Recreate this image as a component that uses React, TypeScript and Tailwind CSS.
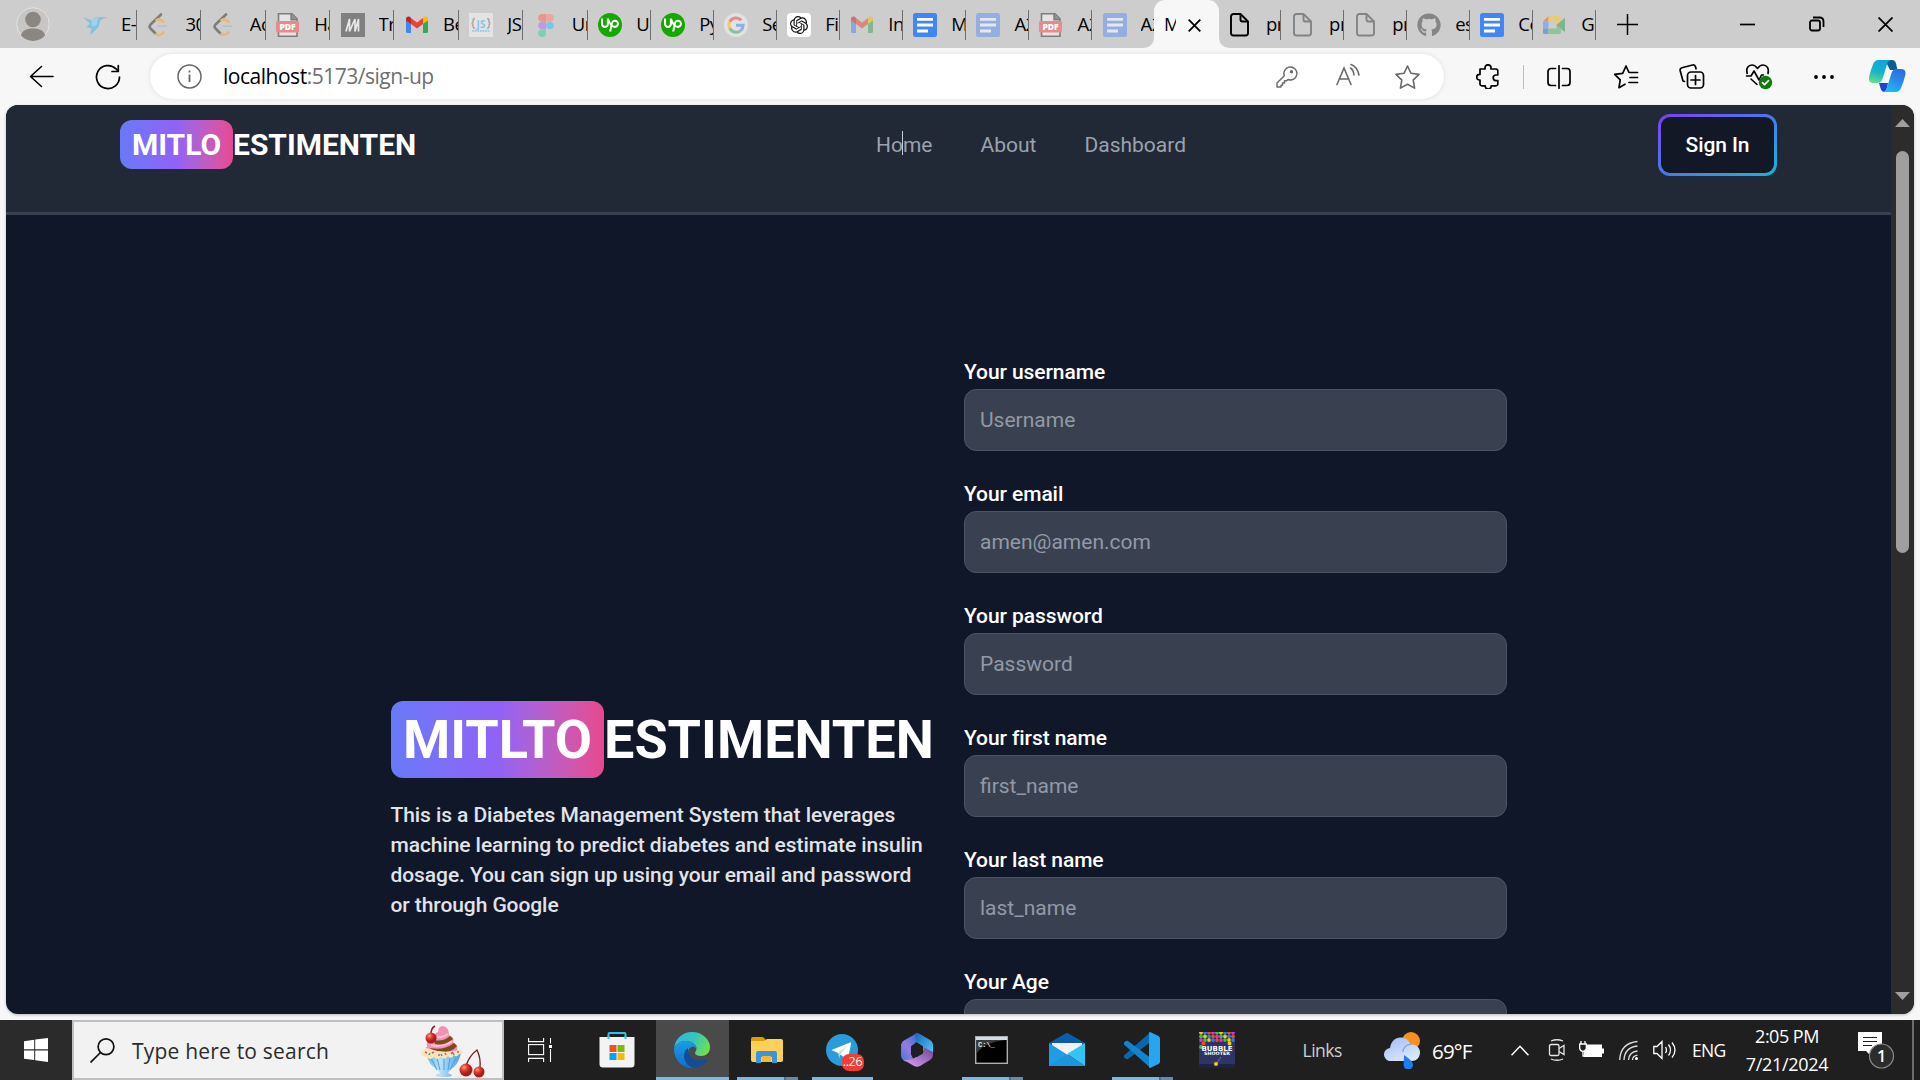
import React from 'react';
import { FaGithub } from 'react-icons/fa';
import { SiUpwork, SiOpenai } from 'react-icons/si';

/* ---------- favicons ---------- */

const Bird = () => (
  <svg width="24" height="24" viewBox="0 0 24 24" className="opacity-90">
    <path d="M0 4.500 8.500 7l4-2.500 3-.5 8.500.3-6.500 2.700L15.500 14 7 22.500 8.500 15.500 3.500 14 7 10.500z" fill="#7cc0e6" />
    <path d="m8.500 7 7-3-2 8.500-5 1z" fill="#9fd2ee" />
  </svg>
);

const Leet = () => (
  <svg width="24" height="24" viewBox="0 0 24 24" fill="none" strokeLinecap="round" strokeLinejoin="round" strokeWidth="2.600">
    <path d="m14 1.500-10.500 10q-1.800 2 0 4l5 5" stroke="#7d7d7d" />
    <path d="M9.500 7q3-2 7 1.800M9.500 21q3.500 2.500 7-1.500" stroke="#e3b878" />
    <path d="M11 13.200h8.500" stroke="#bdbdbd" strokeWidth="1.600" />
  </svg>
);

const Pdf = () => (
  <svg width="24" height="24" viewBox="0 0 24 24">
    <path d="M2.500.8h13.500l5 5v17.400H2.500z" fill="#e4e4e4" stroke="#7d7d7d" strokeWidth="1.600" />
    <path d="M15 .8v6h6" fill="#8d8d8d" stroke="#7d7d7d" strokeWidth="1.400" />
    <rect x="0" y="8" width="23" height="11.500" rx="1.500" fill="#e58b8b" />
    <text x="11.500" y="17" textAnchor="middle" fontSize="8.500" fontWeight="800" fontFamily="Open Sans, sans-serif" fill="#fff">PDF</text>
  </svg>
);

const Medium = () => (
  <svg width="24" height="24" viewBox="0 0 24 24">
    <rect width="24" height="24" fill="#808080" />
    <path d="M5 18.500 8.500 6v12.500L14 6v12.500L17.500 6v12.500" fill="none" stroke="#e6e6e6" strokeWidth="1.700" />
  </svg>
);

const Gmail = ({ faded }: { faded?: boolean }) => (
  <svg width="24" height="24" viewBox="0 0 24 24" className={faded ? 'opacity-50' : ''}>
    <path d="M1 6v12.500q0 1.500 1.500 1.500H6V9z" fill="#4285f4" />
    <path d="M18 9v11h3.500q1.500 0 1.500-1.500V6z" fill="#34a853" />
    <path d="M18 5v6l5-3.500V6c0-2.300-2.500-3-4-2z" fill="#fbbc04" />
    <path d="M6 5v6L1 7.500V6c0-2.300 2.500-3 4-2z" fill="#c5221f" />
    <path d="m6 5 6 4.600L18 5v6l-6 4.600L6 11z" fill="#ea4335" />
  </svg>
);

const JsonIcon = () => (
  <svg width="24" height="24" viewBox="0 0 24 24">
    <rect width="24" height="24" fill="#e3e3e3" />
    <path d="M6 5.500q-2 0-2 2.500t-1.500 2.500Q4 10.500 4 13t2 2M18 5.500q2 0 2 2.500t1.500 2.500Q20 10.500 20 13t-2 2" fill="none" stroke="#a8a8a8" strokeWidth="1.500" />
    <text x="12" y="14.500" textAnchor="middle" fontSize="10" fontWeight="700" fontFamily="Open Sans, sans-serif" fill="#8cc4e8">JS</text>
    <path d="M3 17.800h18" stroke="#9bcbe6" strokeWidth="1.800" strokeDasharray="2 .6" />
  </svg>
);

const Figma = () => (
  <svg width="24" height="24" viewBox="0 0 24 24">
    <path d="M8 1h4v7.700H8A3.850 3.850 0 0 1 8 1z" fill="#e59a87" />
    <path d="M12 1h4a3.850 3.850 0 0 1 0 7.700h-4z" fill="#e8a8a0" />
    <path d="M8 8.700h4v7.600H8a3.800 3.800 0 0 1 0-7.600z" fill="#bb9be3" />
    <circle cx="15.900" cy="12.500" r="3.800" fill="#80c3e6" />
    <path d="M8 16.300h4v3.900a3.900 3.900 0 1 1-4-3.900z" fill="#80cfae" />
  </svg>
);

const Upwork = () => (
  <span className="flex size-6 items-center justify-center rounded-full bg-[#14a800]">
    <SiUpwork size={18} color="#fff" />
  </span>
);

const Google = () => (
  <svg width="24" height="24" viewBox="0 0 24 24" fill="none" strokeWidth="3">
    <circle cx="12" cy="12" r="12" fill="#e2e2e2" />
    <path d="M17.200 7.200A7.200 7.200 0 0 0 5.700 8.700" stroke="#e28d87" />
    <path d="M5.700 8.700a7.200 7.200 0 0 0 0 6.600" stroke="#eccb77" />
    <path d="M5.700 15.300a7.200 7.200 0 0 0 11 2.300" stroke="#8bc29a" />
    <path d="M16.700 17.600A7.200 7.200 0 0 0 19.100 12.200H12" stroke="#8eaee4" />
  </svg>
);

const Gpt = () => (
  <span className="flex size-6 items-center justify-center rounded-[4px] bg-white">
    <SiOpenai size={18} color="#111" />
  </span>
);

const Doc = ({ faded }: { faded?: boolean }) => (
  <svg width="24" height="24" viewBox="0 0 24 24">
    <rect width="24" height="24" rx="2.500" fill={faded ? '#94aee0' : '#4285f4'} />
    <path d="M4 6.300h16M4 12h16M4 18h11" stroke={faded ? '#e3e7ef' : '#fff'} strokeWidth="2.800" />
  </svg>
);

const Page = ({ dark }: { dark?: boolean }) => (
  <svg width="24" height="24" viewBox="0 0 24 24" fill="none" stroke={dark ? '#000' : '#838383'} strokeWidth="1.900" strokeLinejoin="round">
    <path d="M5.500 1h7L20 8.500V20a2.500 2.500 0 0 1-2.500 2.500h-12A2.500 2.500 0 0 1 3 20V3.500A2.500 2.500 0 0 1 5.500 1z" />
    <path d="M12.500 1v5.500a2 2 0 0 0 2 2H20" />
  </svg>
);

const Meet = () => (
  <svg width="24" height="24" viewBox="0 0 24 24">
    <path d="M0 8.500 5.500 3v5.500z" fill="#e08c84" />
    <path d="M5.500 3H16q2 0 2 2v5l-4.500 2V8.500h-8z" fill="#e6cb78" />
    <path d="M0 8.500h5.500v7H0z" fill="#8fade2" />
    <path d="M0 15.500h5.500V21H1.500Q0 21 0 19.500z" fill="#7d9cd6" />
    <path d="M5.500 15.500h8V12l4.500 4v3q0 2-2 2H5.500z" fill="#8fc49d" />
    <path d="m13.500 12 7.500-6.500q1-.5 1 .5v12q0 1-1 .5z" fill="#7db58c" />
  </svg>
);

const tabsBefore: { t: string; icon: React.ReactNode; wide?: boolean }[] = [
  { t: 'E-', icon: <Bird />, wide: true },
  { t: '30', icon: <Leet />, wide: true },
  { t: 'Ac', icon: <Leet />, wide: true },
  { t: 'Ha', icon: <Pdf />, wide: true },
  { t: 'Tr', icon: <Medium />, wide: true },
  { t: 'Be', icon: <Gmail />, wide: true },
  { t: 'JS', icon: <JsonIcon />, wide: true },
  { t: 'Un', icon: <Figma />, wide: true },
  { t: 'U', icon: <Upwork /> },
  { t: 'Py', icon: <Upwork /> },
  { t: 'Se', icon: <Google /> },
  { t: 'Fi', icon: <Gpt /> },
  { t: 'In', icon: <Gmail faded /> },
  { t: 'M', icon: <Doc /> },
  { t: 'A2', icon: <Doc faded /> },
  { t: 'A2', icon: <Pdf /> },
  { t: 'A2', icon: <Doc faded /> },
];

const tabsAfter: { t: string; icon: React.ReactNode; wide?: boolean }[] = [
  { t: 'pr', icon: <Page dark /> },
  { t: 'pr', icon: <Page /> },
  { t: 'pr', icon: <Page /> },
  { t: 'es', icon: <FaGithub size={24} color="#858585" /> },
  { t: 'Co', icon: <Doc /> },
  { t: 'Go', icon: <Meet /> },
];

function Tab({ t, icon, wide, last }: { t: string; icon: React.ReactNode; wide?: boolean; last?: boolean }) {
  return (
    <div className={`flex h-12 shrink-0 items-center ${wide ? 'w-[64.4px]' : 'w-[63.05px]'}`}>
      <span className="mt-[2px] ml-[10.5px] w-6 shrink-0">{icon}</span>
      <span className="ml-[14px] h-[26px] min-w-0 flex-1 overflow-hidden text-[18.5px] leading-[25px] tracking-[-0.5px] whitespace-nowrap">{t}</span>
      <span className={`mt-[2px] h-[30px] w-px shrink-0 ${last ? 'bg-transparent' : 'bg-[#6f6f6f]'}`} />
    </div>
  );
}

function TabStrip() {
  return (
    <div className="flex h-12 items-center bg-[#cdcdcd] text-black">
      <div className="flex w-[72.5px] shrink-0 pl-4">
        <svg width="34" height="34" viewBox="0 0 34 34">
          <circle cx="17" cy="17" r="16.300" fill="#c8c6c4" stroke="#e4e2df" strokeWidth="1" />
          <circle cx="17" cy="12.500" r="7.800" fill="#8a8682" />
          <path d="M5 28.500C6 22.500 12 21.500 17 21.500s11 1 12 7a16 16 0 0 1-24 0z" fill="#8a8682" />
        </svg>
      </div>
      {tabsBefore.map((x, i) => (
        <Tab key={i} {...x} last={i === tabsBefore.length - 1} />
      ))}
      <div className="relative -mx-px flex h-12 w-[64.5px] shrink-0 items-center rounded-t-[11px] bg-[#f7f7f7]">
        <svg className="absolute bottom-0 -left-[10px]" width="10" height="10" viewBox="0 0 10 10">
          <path d="M10 0v10H0A10 10 0 0 0 10 0z" fill="#f7f7f7" />
        </svg>
        <svg className="absolute -right-[10px] bottom-0" width="10" height="10" viewBox="0 0 10 10">
          <path d="M0 0v10h10A10 10 0 0 1 0 0z" fill="#f7f7f7" />
        </svg>
        <span className="ml-[10px] w-[12px] overflow-hidden text-[18px] leading-[25px]">M</span>
        <svg className="mt-[2px] ml-[12px]" width="13" height="13" viewBox="0 0 13 13" stroke="#000" strokeWidth="1.800">
          <path d="m.7.7 11.600 11.600M12.300.7.700 12.300" />
        </svg>
      </div>
      {tabsAfter.map((x, i) => (
        <Tab key={i} {...x} />
      ))}
      <svg className="ml-[21.5px] shrink-0" width="21" height="21" viewBox="0 0 21 21" stroke="#000" strokeWidth="1.500">
        <path d="M10.500 0v21M0 10.500h21" />
      </svg>
      <div className="mr-[27px] ml-auto flex items-center">
        <svg width="15" height="15" viewBox="0 0 15 15" stroke="#000" strokeWidth="1.700">
          <path d="M0 7.500h15" />
        </svg>
        <svg className="ml-[54px]" width="16" height="16" viewBox="0 0 16 16" fill="none" stroke="#000" strokeWidth="1.800">
          <rect x="1" y="4.500" width="10" height="10" rx="2" />
          <path d="M4 1.500h6.500q4 0 4 4V11" />
        </svg>
        <svg className="ml-[53px]" width="15" height="15" viewBox="0 0 15 15" stroke="#000" strokeWidth="1.800">
          <path d="m.5.5 14 14M14.500.5l-14 14" />
        </svg>
      </div>
    </div>
  );
}

/* ---------- toolbar ---------- */

function Toolbar() {
  return (
    <div className="flex h-[57px] items-center bg-[#f7f7f7]">
      <svg className="ml-[29px] shrink-0" width="26" height="24" viewBox="0 0 26 24" fill="none" stroke="#000" strokeWidth="1.600" strokeLinecap="round" strokeLinejoin="round">
        <path d="M24 11.500H1.500M12.500 1.500 1.500 11.500l11 10" />
      </svg>
      <svg className="ml-[40px] shrink-0" width="26" height="26" viewBox="0 0 26 26" fill="none" stroke="#000" strokeWidth="1.700" strokeLinecap="round" strokeLinejoin="round">
        <path d="M24.500 13A11.500 11.500 0 1 1 21 4.800l2 2.200" />
        <path d="M23.300 1.500V7.500H17" />
      </svg>
      <div className="ml-[29px] flex h-[45px] w-[1294px] shrink-0 items-center rounded-full bg-white shadow-[0_0_5px_rgba(0,0,0,0.1)]">
        <svg className="ml-[26.5px] shrink-0" width="25" height="25" viewBox="0 0 25 25" fill="none" stroke="#666" strokeWidth="1.500">
          <circle cx="12.500" cy="12.500" r="11.500" />
          <path d="M12.500 10.500v7.500M12.500 6.500v2" strokeWidth="1.800" />
        </svg>
        <span className="ml-[21.5px] text-[21px] tracking-[-0.48px] text-black">
          localhost<span className="text-[#6f6f6f]">:5173/sign-up</span>
        </span>
        <div className="mr-[24.5px] ml-auto flex items-center">
          <svg width="22" height="22" viewBox="0 0 22 22" fill="none" stroke="#6a6a6a" strokeWidth="1.400" strokeLinejoin="round">
            <path d="M1 21v-4l7.300-7.300A6.500 6.500 0 1 1 12 13.500l-1.300 1.300H8.500V17H6.500v2.200H5V21z" />
            <circle cx="15.500" cy="5.800" r="1" fill="#6a6a6a" />
          </svg>
          <svg className="mb-[5px] ml-[38px]" width="24" height="24" viewBox="0 0 24 24" fill="none" stroke="#6a6a6a" strokeWidth="1.600" strokeLinecap="round">
            <path d="M1 22.500 8 6l7 16.500M3.500 17h9M14.500 6q3 2 3.500 7M15 2.500q6 2 8 10.500" />
          </svg>
          <svg className="ml-[35px]" width="25" height="24" viewBox="0 0 25 24" fill="none" stroke="#6a6a6a" strokeWidth="1.600" strokeLinejoin="round">
            <path d="m12.500 1 3.500 7.300 8 1.100-5.800 5.700 1.400 8-7.100-3.900-7.100 3.900 1.400-8L1 9.400l8-1.100z" />
          </svg>
        </div>
      </div>
      <svg className="ml-[31.5px] shrink-0" width="24" height="25" viewBox="0 0 24 25" fill="none" stroke="#000" strokeWidth="1.700" strokeLinejoin="round">
        <path d="M4 5h5V3.800a3 3 0 0 1 6 0V5h5a1.800 1.800 0 0 1 1.800 1.800v4.200h-1.800a2.800 2.800 0 0 0 0 5.600h1.800V20A1.800 1.800 0 0 1 20 21.800h-4.800v.2a3 3 0 0 1-6 0v-.2H5.800A1.800 1.800 0 0 1 4 20v-4H3.500a2.800 2.800 0 0 1 0-5.600H4z" />
      </svg>
      <span className="ml-[23.5px] h-6 w-px shrink-0 bg-[#bdbdbd]" />
      <svg className="ml-[23px] shrink-0" width="24" height="24" viewBox="0 0 24 24" fill="none" stroke="#000" strokeWidth="1.700" strokeLinecap="round">
        <path d="M8.500 3.500H4a3 3 0 0 0-3 3v11a3 3 0 0 0 3 3h4.500M15.500 3.500H20a3 3 0 0 1 3 3v11a3 3 0 0 1-3 3h-4.500M12 .8v22.400" />
      </svg>
      <svg className="ml-[42px] shrink-0" width="26" height="24" viewBox="0 0 26 24" fill="none" stroke="#000" strokeWidth="1.700" strokeLinecap="round" strokeLinejoin="round">
        <path d="M24.500 7.500H16l-3-6.500-3.300 7.300-8 1.100 5.500 5.500-1.200 7.800 6-3.500M17 12.500h7.500M16 17.500h8.500" />
      </svg>
      <svg className="ml-[40px] shrink-0" width="26" height="25" viewBox="0 0 26 25" fill="none" stroke="#000" strokeWidth="1.700" strokeLinecap="round" strokeLinejoin="round">
        <path d="M5.500 17.500 4 17 1.200 6.800A2.500 2.500 0 0 1 3 3.800L13.500 1a2.500 2.500 0 0 1 3 1.800l.5 2" />
        <rect x="8.500" y="8" width="16" height="16" rx="3.500" />
        <path d="M16.500 11.500v9M12 16h9" />
      </svg>
      <svg className="ml-[40px] shrink-0" width="28" height="27" viewBox="0 0 28 27" fill="none" stroke="#000" strokeWidth="1.600" strokeLinecap="round" strokeLinejoin="round">
        <path d="M2.200 10.500C.5 5 3.500 2 7 2c3 0 4.500 2 5.500 3.500C13.500 4 15 2 18 2c3.500 0 6.500 3 5 8.500M6 16l6 5.500M1.500 13H6l3-5 5 9 2.500-5h2" />
        <circle cx="20.500" cy="19.500" r="6.700" fill="#107c10" stroke="none" />
        <path d="m17.500 19.700 2 2 4-4" stroke="#fff" strokeWidth="1.700" />
      </svg>
      <svg className="ml-[40px] shrink-0" width="22" height="6" viewBox="0 0 22 6">
        <circle cx="3" cy="3" r="1.900" />
        <circle cx="11" cy="3" r="1.900" />
        <circle cx="19" cy="3" r="1.900" />
      </svg>
      <svg className="ml-[34px] shrink-0" width="37" height="33" viewBox="0 0 37 33">
        <defs>
          <linearGradient id="cpA" x1="0.500" y1="0" x2="0.200" y2="1">
            <stop offset="0" stopColor="#12a5dc" />
            <stop offset=".5" stopColor="#17b3c9" />
            <stop offset="1" stopColor="#6be083" />
          </linearGradient>
          <linearGradient id="cpB" x1="0.800" y1="0" x2="0.300" y2="1">
            <stop offset="0" stopColor="#2b6ce0" />
            <stop offset=".5" stopColor="#2a8bea" />
            <stop offset="1" stopColor="#19c0f4" />
          </linearGradient>
        </defs>
        <path d="M16 0h7q3 0 4 3.500L28.500 10H21z" fill="#0a5d8f" />
        <path d="M10 23h9l-2 9h-1.500q-3 0-4-4z" fill="#1746d1" />
        <path d="M9.500 0H22q-3 .8-4 4.500L13.500 19q-1.300 4-5 4H4q-5 0-4-6Q2 9 4.200 4 6 0 9.500 0z" fill="url(#cpA)" />
        <path d="M27.500 9H32q5.500 0 4.300 6-2 8-4.300 13-1.800 4-5 4H14.500q2.500-1 3.500-4.500L22.500 13q1.300-4 5-4z" fill="url(#cpB)" />
      </svg>
    </div>
  );
}

/* ---------- web page ---------- */

const fields = [
  ['Your username', 'Username'],
  ['Your email', 'amen@amen.com'],
  ['Your password', 'Password'],
  ['Your first name', 'first_name'],
  ['Your last name', 'last_name'],
  ['Your Age', 'age'],
];

function WebPage() {
  return (
    <div className="mx-[6px] flex h-[909px] overflow-hidden rounded-[12px] bg-[#101729] font-[Roboto,sans-serif] shadow-[0_1px_3px_rgba(0,0,0,0.25)]">
      <div className="h-full min-w-0 flex-1 overflow-hidden">
        <header className="flex h-[110px] items-start border-b-[3px] border-[#394150] bg-[#212936] pl-[114px]">
          <div className="mt-[15px] flex h-[49px] w-[642px] items-center text-[30px] font-bold text-white">
            <span className="flex h-[49px] w-[113px] items-center rounded-[12px] bg-linear-to-r from-[#6779f8] via-[#9062f6] to-[#e8478f] pl-3">MITLO</span>
            <span>ESTIMENTEN</span>
          </div>
          <nav className="mt-[26px] ml-[114px] flex h-[30px] items-center gap-12 text-[21px] text-[#9ba2ae]">
            <span className="relative">
              Home
              <span className="absolute top-[1px] left-[26px] h-6 w-px bg-[#c8ccd2]" />
            </span>
            <span>About</span>
            <span>Dashboard</span>
          </nav>
          <div className="mt-[9px] mr-[114px] ml-auto h-[62px] w-[119px] rounded-[12px] bg-linear-to-br from-[#7c3aed] via-[#4478ea] to-[#06b6d4] p-[3px]">
            <div className="flex h-full items-center justify-center rounded-[9px] bg-[#121826] pt-px text-[21px] font-medium tracking-[-0.08px] text-white">Sign In</div>
          </div>
        </header>
        <main className="flex pt-[142px] pl-[384.5px]">
          <section className="mt-[344px] w-[543px] shrink-0">
            <div className="flex h-[77px] items-center text-[54px] font-bold whitespace-nowrap text-white">
              <span className="flex h-[77px] w-[213.5px] shrink-0 items-center rounded-[12px] bg-linear-to-r from-[#6779f8] via-[#9062f6] to-[#e8478f] pl-[12.5px]">MITLTO</span>
              <span>ESTIMENTEN</span>
            </div>
            <p className="mt-[22px] text-[21px] leading-[30px] font-medium tracking-[-0.08px] text-[#e0e3e8]">
              This is a Diabetes Management System that leverages machine learning to predict diabetes and estimate insulin dosage. You can sign up using your email and password or through Google
            </p>
          </section>
          <form className="ml-[30.5px] flex w-[543px] shrink-0 flex-col gap-[30px]">
            {fields.map(([label, ph]) => (
              <div key={label} className="h-[92px]">
                <div className="h-[30px] text-[21px] leading-[30px] font-medium tracking-[-0.08px] text-white">{label}</div>
                <div className="mt-[2px] flex h-[62px] items-center rounded-[12px] border border-[#4b5462] bg-[#394150] pt-[2px] pl-[15px] text-[21px] text-[#9299a6]">{ph}</div>
              </div>
            ))}
          </form>
        </main>
      </div>
      <div className="flex h-full w-[23px] shrink-0 flex-col items-center bg-[#2c2c2c]">
        <svg className="mt-[14px] shrink-0" width="15" height="8" viewBox="0 0 15 8">
          <path d="M7.500 0 15 8H0z" fill="#9f9f9f" />
        </svg>
        <div className="mt-[24px] h-[402px] w-[13px] rounded-full bg-[#9f9f9f]" />
        <svg className="mt-auto mb-[14px] shrink-0" width="15" height="8" viewBox="0 0 15 8">
          <path d="M7.500 8 15 0H0z" fill="#9f9f9f" />
        </svg>
      </div>
    </div>
  );
}

/* ---------- taskbar ---------- */

function Slot({ children, run, active }: { children: React.ReactNode; run?: 'one' | 'many'; active?: boolean }) {
  return (
    <div className="relative flex h-full w-[75px] shrink-0 items-center justify-center">
      {active && <span className="absolute inset-y-0 right-0 w-[73px] bg-[#4a4a4a]" />}
      <span className="relative">{children}</span>
      {active && <span className="absolute right-0 bottom-0 h-[3px] w-[73px] bg-[#76b9ed]" />}
      {run && (
        <span className="absolute bottom-0 left-[8px] flex h-[3px] w-[61px] bg-[#76b9ed]">
          {run === 'many' && <span className="ml-[47px] w-[2px] bg-[#46708f]" />}
          {run === 'many' && <span className="w-3 bg-[#5b8db5]" />}
        </span>
      )}
    </div>
  );
}

const Cupcake = () => (
  <svg width="66" height="54" viewBox="0 0 66 54">
    <defs>
      <linearGradient id="cup" x1="0" x2="1">
        <stop offset="0" stopColor="#5cb0ee" />
        <stop offset=".4" stopColor="#b9e2fb" />
        <stop offset="1" stopColor="#4b9fe6" />
      </linearGradient>
      <radialGradient id="cher" cx=".35" cy=".3">
        <stop offset="0" stopColor="#ff9b80" />
        <stop offset=".5" stopColor="#e2412f" />
        <stop offset="1" stopColor="#a91d1c" />
      </radialGradient>
    </defs>
    <path d="M6 28h35q-3 13-11 17l-2 3 4 2q0 2-8 2t-8-2l4-2-2-3Q9 41 6 28z" fill="url(#cup)" />
    <path d="m11 33 6 12M17 33l3 12M24 33v12M30 33l-2 12M36 33l-6 12" stroke="#4d9fe2" strokeWidth="1" />
    <path d="M7 22q-2-6 7-9 0-5 4-6 0-6 5-6 6 1 6 9 6 2 4 7 6 3 4 9-16 6-32-3z" fill="#f58fb4" />
    <path d="M14 15q9 2 16-4l3 3q-6 7-18 5zM10 23q14 3 24-5l3 3q-6 8-22 6z" fill="#7b4a1e" />
    <path d="M17 12q6 1 11-3M11 20q12 3 21-4" stroke="#ffc1d6" strokeWidth="2" fill="none" />
    <path d="M1 26q4-4 9-2 14 5 29 1 4 0 4 3-2 2-4 1-2 4-5 1-3 5-6 1-4 5-7 1-4 4-7 0-4 4-7 0-7 0-6-6z" fill="#fbe7b4" />
    <path d="m5 27 2 1M12 28l2-1M18 30h2M25 28l1 2M31 29l2-2M37 27h2" stroke="#e0487f" strokeWidth="1.500" />
    <path d="m9 30 1-2M22 31l-1-2M34 30l-1-2" stroke="#3b8fe0" strokeWidth="1.500" />
    <path d="M11 9Q11 3 15 1" stroke="#7c2433" strokeWidth="1.500" fill="none" />
    <circle cx="11" cy="13" r="5.500" fill="url(#cher)" />
    <path d="M46 41q3-10 11-16 4 8 3 18" stroke="#7c2433" strokeWidth="1.400" fill="none" />
    <circle cx="46" cy="45" r="6.500" fill="url(#cher)" />
    <circle cx="59" cy="47" r="5.500" fill="url(#cher)" />
  </svg>
);

const TaskView = () => (
  <svg className="-ml-[4px] block" width="24" height="24" viewBox="0 0 24 24" fill="none" stroke="#fff" strokeWidth="1.100">
    <path d="M.6 0v3.600h15V0M.6 24v-3.600h15V24M22.500 0v5.500M22.500 11v13" />
    <rect x=".6" y="6.600" width="15" height="10" />
    <path d="M21 7h3v3h-3z" fill="#fff" stroke="none" />
  </svg>
);

const Store = () => (
  <svg width="36" height="36" viewBox="0 0 36 36">
    <path d="M9.500 7V2q0-1 1-1h15q1 0 1 1v5" fill="none" stroke="#2fc1ef" strokeWidth="2" />
    <path d="M.5 5h35v27a3.500 3.500 0 0 1-3.500 3.500H4A3.500 3.500 0 0 1 .5 32z" fill="#f3f3f3" />
    <path d="M9.500 7V4M26.500 7V4" stroke="#2fc1ef" strokeWidth="2" />
    <path d="M10.500 13h7v7h-7z" fill="#f25022" />
    <path d="M18.500 13h7v7h-7z" fill="#7fba00" />
    <path d="M10.500 21h7v7h-7z" fill="#00a4ef" />
    <path d="M18.500 21h7v7h-7z" fill="#ffb900" />
  </svg>
);

const Edge = () => (
  <svg width="36" height="36" viewBox="0 0 36 36">
    <defs>
      <linearGradient id="eA" x1="0" y1=".2" x2="1" y2=".6">
        <stop offset="0" stopColor="#35b5e9" />
        <stop offset=".5" stopColor="#33c6bd" />
        <stop offset="1" stopColor="#6fe04f" />
      </linearGradient>
      <linearGradient id="eB" x1="0" y1="0" x2="0" y2="1">
        <stop offset="0" stopColor="#1b9de2" />
        <stop offset="1" stopColor="#0d6fd0" />
      </linearGradient>
    </defs>
    <path d="M0 17C1 6 9 0 18 0c11 0 18 8 18 15 0 6-4 9-9 9-4 0-6-1.500-6-3 0-1 1.500-2 1.500-4.500C22.500 12 17 9 12 9 6 9 1.500 12 0 17z" fill="url(#eA)" />
    <path d="M0 17C1.500 12 6 9 12 9c5.500 0 10.500 3 10.500 7.500-3-3.500-8-1-8.500 4-.5 6 4 12 11 12.500-2 2-5 3-7 3C8 36 0 28 0 17z" fill="url(#eB)" />
    <path d="M14 16c-3 2-4 5-4 8 0 6 5 11.500 10 12 6-.5 11-4 13.500-8 .4-.8-.2-1.200-1-.8C24 31 13 27 14 16z" fill="#124e97" />
  </svg>
);

const Folder = () => (
  <svg width="32" height="28" viewBox="0 0 32 28">
    <path d="M0 3q0-2 2-2h10l3 3v5H0z" fill="#dd9c07" />
    <path d="M0 5h13l3-2h14q2 0 2 2v19q0 2-2 2H2q-2 0-2-2z" fill="#fdd05a" />
    <path d="M5 27V17q0-2 2-2h17q2 0 2 2v10h-5v-6H10v6z" fill="#3a94dc" />
    <path d="M11 20h9v6h-9z" fill="#f7b733" />
  </svg>
);

const Telegram = () => (
  <span className="relative block size-[34px]">
    <svg width="34" height="34" viewBox="0 0 34 34">
      <circle cx="17" cy="17" r="16" fill="#2a9cd9" />
      <path d="M6.500 17 25 9.500q1.500-.5 1 1.500l-3 14q-.5 1.500-2 .5L13 20z" fill="#fff" />
      <path d="m13 20 9-7.500-7 9-.5 4z" fill="#b9d9ee" />
    </svg>
    <span className="absolute -right-[5px] -bottom-[4px] flex h-[17px] w-[22px] items-center justify-center rounded-[7px] bg-[#f23c34] text-[12.5px] leading-none tracking-[-0.3px] text-white">..26</span>
  </span>
);

const M365 = () => (
  <svg width="34" height="36" viewBox="0 0 34 36">
    <defs>
      <linearGradient id="mA" x1=".8" y1="0" x2="0" y2="1">
        <stop offset="0" stopColor="#3f6fd8" />
        <stop offset=".5" stopColor="#9a7be0" />
        <stop offset="1" stopColor="#3b78d8" />
      </linearGradient>
      <linearGradient id="mB" x1="0" y1="0" x2="1" y2="1">
        <stop offset="0" stopColor="#1f5fb8" />
        <stop offset="1" stopColor="#4fd3f7" />
      </linearGradient>
      <linearGradient id="mC" x1="0" y1="1" x2="1" y2="0">
        <stop offset="0" stopColor="#e0a4fb" />
        <stop offset="1" stopColor="#6b4590" />
      </linearGradient>
    </defs>
    <path d="M17 1 4 8.500Q1 10.500 1 14v9q0 4 4 6.500 5 0 8-3l-2-4v-8l6-5z" fill="url(#mA)" />
    <path d="M15 1.500q2-1 5 .5l10 6q3 2 3 5.500v10l-10-5v-4L16 10z" fill="url(#mB)" />
    <path d="M33 20v3q0 3-3 5l-10 6q-3 1.500-6 0L4 28q8 0 12-3l7-4.500q1-1 1-5z" fill="url(#mC)" />
    <path d="m17 11 6 3.500v7L17 25l-6-3.500v-7z" fill="#1f1f1f" />
  </svg>
);

const Cmd = () => (
  <svg width="33" height="28" viewBox="0 0 33 28">
    <rect x=".7" y=".7" width="31.600" height="26.600" fill="#000" stroke="#a9b0b5" strokeWidth="1.400" />
    <path d="M1 1h31v3H1z" fill="#d6dde2" />
    <path d="M2 4h29Q10 6 2 17z" fill="#3a3a3a" />
    <text x="3" y="11" fontSize="7" fontWeight="700" fontFamily="Liberation Mono, monospace" fill="#e8e8e8">C:\_</text>
  </svg>
);

const Mail = () => (
  <svg width="36" height="36" viewBox="0 0 36 36">
    <path d="M0 11 16.500 1.500q1.500-1 3 0L36 11v4H0z" fill="#0b5cab" />
    <path d="M3 11h30v12H3z" fill="#f3f3f3" />
    <path d="M0 11 36 34H0z" fill="#1f9de4" />
    <path d="M36 11v23L18 22z" fill="#33c4f3" />
    <path d="M0 34 18 22.500 36 34z" fill="#1c94de" />
  </svg>
);

const Code = () => (
  <svg width="36" height="36" viewBox="0 0 36 36">
    <path d="M0 23.500 26 .5v10L4 27q-1 .6-2 0l-2-1.500q-.8-1 0-2z" fill="#0b66ad" />
    <path d="M0 12.500q-.8-1 0-2L2 9q1-.6 2 0l22 16.500v10z" fill="#1283cf" />
    <path d="m26 0 8.500 4Q36 5 36 6.500v23q0 1.500-1.500 2.500L26 36q-1 0-1-1V1q0-1 1-1z" fill="#28a5ef" />
  </svg>
);

const bubbleColors = ['#f2c81e', '#e032c8', '#2f7cf0', '#30c93a', '#f04a2c'];
const Bubble = () => (
  <svg width="36" height="36" viewBox="0 0 36 36">
    <rect width="36" height="36" fill="#2f3465" />
    <rect width="36" height="9" fill="#1c1c30" />
    {[0, 1, 2].map((r) =>
      Array.from({ length: 9 }, (_, c) => (
        <circle key={`${r}-${c}`} cx={2 + c * 4} cy={0.8 + r * 3.6} r="1.900" fill={bubbleColors[(c * 2 + r * 3) % 5]} />
      )),
    )}
    <circle cx="4.500" cy="11.500" r="2" fill="#f04a2c" />
    <circle cx="30.500" cy="11.500" r="2" fill="#f2c81e" />
    <circle cx="2" cy="15" r="1.900" fill="#30c93a" />
    <text x="18" y="18.500" textAnchor="middle" fontSize="7" fontWeight="900" fontFamily="DejaVu Sans, sans-serif" textLength="31" lengthAdjust="spacingAndGlyphs" fill="#fff">BUBBLE</text>
    <text x="18" y="22.500" textAnchor="middle" fontSize="4.500" fontWeight="900" fontFamily="DejaVu Sans, sans-serif" textLength="26" lengthAdjust="spacingAndGlyphs" fill="#fff">SHOOTER</text>
    <path d="m22 25-5 7" stroke="#5d6291" strokeWidth="1.200" />
    <path d="M0 32h36v4H0z" fill="#1f2244" />
    <circle cx="17" cy="32" r="2" fill="#f2c81e" />
  </svg>
);

function Taskbar() {
  return (
    <div className="flex h-[60px] items-center bg-[#1f1f1f]">
      <div className="flex h-full w-[72px] shrink-0 items-center justify-center bg-[#2b2b2b]">
        <svg width="24" height="24" viewBox="0 0 24 24" fill="#fff">
          <path d="M0 3.300 10.200 1.800v9.500H0zM11.200 1.600 24 0v11.300H11.200zM0 12.400h10.200v9.700L0 20.700zM11.200 12.400H24V24l-12.800-1.700z" />
        </svg>
      </div>
      <div className="flex h-full w-[432px] shrink-0 items-center border-2 border-[#bfbfbf] bg-[#f2f2f2]">
        <svg className="mb-[15px] ml-[16px] shrink-0 self-end" width="25" height="25" viewBox="0 0 25 25" fill="none" stroke="#111" strokeWidth="1.700">
          <circle cx="16" cy="8.800" r="7.900" />
          <path d="M10.500 14.500.5 24.500" />
        </svg>
        <span className="mt-[3px] ml-[17px] text-[21px] tracking-[0.2px] text-[#2b2b2b]">Type here to search</span>
        <span className="mt-[3px] mr-[16px] ml-auto">
          <Cupcake />
        </span>
      </div>
      <Slot><TaskView /></Slot>
      <Slot><Store /></Slot>
      <Slot active><Edge /></Slot>
      <Slot run="many"><Folder /></Slot>
      <Slot run="one"><Telegram /></Slot>
      <Slot><M365 /></Slot>
      <Slot run="many"><Cmd /></Slot>
      <Slot><Mail /></Slot>
      <Slot run="many"><Code /></Slot>
      <Slot><Bubble /></Slot>
      <span className="ml-[48.5px] w-[81.5px] shrink-0 text-[17.5px] tracking-[-0.5px] text-[#cfcfcf]">Links</span>
      <svg className="shrink-0" width="36" height="37" viewBox="0 0 36 37">
        <defs>
          <linearGradient id="wc" x1="0" y1="0" x2=".6" y2="1">
            <stop offset="0" stopColor="#9dbcf5" />
            <stop offset="1" stopColor="#dbe8fd" />
          </linearGradient>
        </defs>
        <circle cx="27" cy="9" r="9" fill="#f5911e" />
        <path d="M7 29a6.500 6.500 0 0 1-1-13C7 9 12 5 17 5.500c5 .3 8 3 9.500 7C33 12 36 16 36 20.500c0 5-4 8.500-8 8.500z" fill="url(#wc)" />
        <path d="M19 20c0-5 4-8 8-7.500" fill="none" stroke="#7fa6ee" strokeWidth="1.200" />
        <path d="M20 23q9 6 9 10a4.700 4.700 0 0 1-9.400 0z" fill="#1f7df2" />
      </svg>
      <span className="mt-[3px] ml-[12px] w-[79px] shrink-0 text-[20.5px] tracking-[-0.8px] text-white">69°F</span>
      <svg className="shrink-0" width="18" height="11" viewBox="0 0 18 11" fill="none" stroke="#fff" strokeWidth="1.500">
        <path d="m.5 10.300 8.500-9 8.500 9" />
      </svg>
      <svg className="ml-[19px] shrink-0" width="18" height="22" viewBox="0 0 18 22" fill="none" stroke="#e8e8e8" strokeWidth="1.300">
        <rect x="1.500" y="5.500" width="9.500" height="11" rx="1.500" />
        <path d="m11 9.500 5-3v9l-5-3M3 2q6-2.500 12 0M3 20q6 2.500 12 0" />
      </svg>
      <svg className="ml-[13px] shrink-0" width="25" height="18" viewBox="0 0 25 18">
        <rect x="5.500" y="4" width="17" height="11.500" fill="#fff" stroke="#fff" />
        <path d="M23 7.500h2v5h-2z" fill="#fff" />
        <path d="M.7 3h6.600v4.500q-.8 2.800-3.300 2.800T.7 7.500z" fill="#1f1f1f" stroke="#fff" strokeWidth="1.300" />
        <path d="M2 0v3M6 0v3M4 10.500V15h2" stroke="#fff" strokeWidth="1.300" fill="none" />
      </svg>
      <svg className="ml-[15px] shrink-0" width="20" height="20" viewBox="0 0 20 20" fill="none" stroke="#dedede" strokeWidth="1.300">
        <path d="M.7 20Q1.500 3 18.500 1.500M5 20Q5.500 7.500 18.500 6M9.500 20q.5-8 9-9M13.500 20q0-4 5-4.800" />
        <circle cx="17.500" cy="18.500" r="1.500" fill="#fff" stroke="none" />
      </svg>
      <svg className="ml-[14px] shrink-0" width="24" height="20" viewBox="0 0 24 20" fill="none" stroke="#fff" strokeWidth="1.300">
        <path d="M.8 6.500h3.200l5-5v17l-5-5H.8zM12.500 7q2 3 0 6M15.500 4.500q4 5.500 0 11M19 2.500q6 7.500 0 15" />
      </svg>
      <span className="ml-[15px] w-[34px] shrink-0 text-[17.5px] tracking-[-0.7px] text-white">ENG</span>
      <div className="ml-[16px] flex w-[90px] shrink-0 flex-col items-center text-[18px] leading-[28px] tracking-[-0.3px] whitespace-nowrap text-white">
        <span className="tracking-[-0.5px]">2:05 PM</span>
        <span>7/21/2024</span>
      </div>
      <svg className="ml-[26px] shrink-0" width="37" height="37" viewBox="0 0 37 37">
        <path d="M0 0h24v19H13v5l-5-5H0z" fill="#fff" />
        <path d="M5 5.500h14M5 9.500h14M5 13.500h9" stroke="#1f1f1f" strokeWidth="1.200" />
        <circle cx="23.500" cy="24" r="12" fill="#2c2c2c" stroke="#8a8a8a" strokeWidth="1.200" />
        <text x="23.500" y="30" textAnchor="middle" fontSize="16" fontWeight="600" fontFamily="Open Sans, sans-serif" fill="#fff">1</text>
      </svg>
      <span className="mr-[6px] ml-auto h-full w-[2px] shrink-0 bg-[#6d6d6d]" />
    </div>
  );
}

export default function App() {
  return (
    <div className="h-[1080px] w-[1920px] overflow-hidden bg-[#f7f7f7] font-['Open_Sans','Noto_Sans',sans-serif]">
      <TabStrip />
      <Toolbar />
      <WebPage />
      <div className="h-[6px]" />
      <Taskbar />
    </div>
  );
}
